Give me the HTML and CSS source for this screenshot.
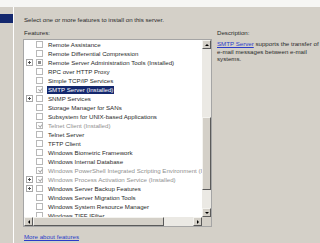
FILE: index.html
```html
<!DOCTYPE html>
<html>
<head>
    <title>Add Features Wizard</title>
    <link rel="stylesheet" href="styles.css">
</head>
<body>
    <div class="banner"></div>
    <div class="wizard">
        <div class="steps">
            <div class="step active"></div>
        </div>
        <div class="page">
            <p class="intro">Select one or more features to install on this server.</p>
            <div class="columns">
                <div class="features">
                    <div class="label">Features:</div>
                    <div class="listbox">
                        <div class="viewport">
                            <ul class="tree">
                                <li class="row"><span class="toggle"></span><span class="check"></span><span class="name">Remote Assistance</span></li>
                                <li class="row"><span class="toggle"></span><span class="check"></span><span class="name">Remote Differential Compression</span></li>
                                <li class="row"><span class="toggle plus"></span><span class="check partial"></span><span class="name">Remote Server Administration Tools  (Installed)</span></li>
                                <li class="row"><span class="toggle"></span><span class="check"></span><span class="name">RPC over HTTP Proxy</span></li>
                                <li class="row"><span class="toggle"></span><span class="check"></span><span class="name">Simple TCP/IP Services</span></li>
                                <li class="row selected"><span class="toggle"></span><span class="check on"></span><span class="name">SMTP Server  (Installed)</span></li>
                                <li class="row"><span class="toggle plus"></span><span class="check"></span><span class="name">SNMP Services</span></li>
                                <li class="row"><span class="toggle"></span><span class="check"></span><span class="name">Storage Manager for SANs</span></li>
                                <li class="row"><span class="toggle"></span><span class="check"></span><span class="name">Subsystem for UNIX-based Applications</span></li>
                                <li class="row installed"><span class="toggle"></span><span class="check on"></span><span class="name">Telnet Client  (Installed)</span></li>
                                <li class="row"><span class="toggle"></span><span class="check"></span><span class="name">Telnet Server</span></li>
                                <li class="row"><span class="toggle"></span><span class="check"></span><span class="name">TFTP Client</span></li>
                                <li class="row"><span class="toggle"></span><span class="check"></span><span class="name">Windows Biometric Framework</span></li>
                                <li class="row"><span class="toggle"></span><span class="check"></span><span class="name">Windows Internal Database</span></li>
                                <li class="row installed"><span class="toggle"></span><span class="check on"></span><span class="name">Windows PowerShell Integrated Scripting Environment (ISE)  (Installed)</span></li>
                                <li class="row installed"><span class="toggle plus"></span><span class="check on"></span><span class="name">Windows Process Activation Service  (Installed)</span></li>
                                <li class="row"><span class="toggle plus"></span><span class="check"></span><span class="name">Windows Server Backup Features</span></li>
                                <li class="row"><span class="toggle"></span><span class="check"></span><span class="name">Windows Server Migration Tools</span></li>
                                <li class="row"><span class="toggle"></span><span class="check"></span><span class="name">Windows System Resource Manager</span></li>
                                <li class="row"><span class="toggle"></span><span class="check"></span><span class="name">Windows TIFF IFilter</span></li>
                            </ul>
                        </div>
                        <div class="vscroll">
                            <span class="arrow up"></span>
                            <div class="track"><div class="thumb"></div></div>
                            <span class="arrow down"></span>
                        </div>
                        <div class="hscroll">
                            <span class="arrow left"></span>
                            <div class="track"><div class="thumb"></div></div>
                            <span class="arrow right"></span>
                        </div>
                        <div class="corner"></div>
                    </div>
                    <a class="more" href="#">More about features</a>
                </div>
                <div class="description">
                    <div class="label">Description:</div>
                    <p><a href="#">SMTP Server</a> supports the transfer of e-mail messages between e-mail systems.</p>
                </div>
            </div>
        </div>
    </div>
</body>
</html>
```

FILE: styles.css
```css
body {
    margin: 0;
    width: 320px;
    height: 243px;
    overflow: hidden;
    font-family: 'Liberation Sans', Arial, sans-serif;
    font-size: 6.15px;
    color: #2a2a2a;
    background: #d4d0c8;
}
a {
    color: #2a3cc8;
    text-decoration: underline;
}
.banner {
    height: 7px;
    background: #f6f6f4;
}
.wizard {
    display: flex;
    height: 236px;
}
.steps {
    width: 13px;
    border-right: 1px solid #fff;
    padding-top: 7px;
}
.step {
    height: 9px;
}
.step.active {
    background: #14286e;
}
.page {
    flex: 1;
    padding: 8px 0 0 9px;
    min-width: 0;
}
.intro {
    margin: 0 0 4px 1px;
    line-height: 9px;
    white-space: nowrap;
}
.columns {
    display: flex;
    gap: 5px;
}
.label {
    line-height: 9px;
    margin: 0 0 2px 1px;
}
.features {
    width: 189px;
    display: flex;
    flex-direction: column;
}
.description {
    flex: 1;
    min-width: 0;
}
.description .label {
    margin: 0 0 3px;
}
.description p {
    margin: 0;
    line-height: 7.5px;
}
/* List box with its two scroll bars */
.listbox {
    box-sizing: border-box;
    width: 189px;
    height: 188px;
    border: 1px solid #a5a5a5;
    background: #fff;
    display: grid;
    grid-template-columns: 1fr 9px;
    grid-template-rows: 1fr 9px;
}
.viewport {
    overflow: hidden;
    min-width: 0;
    min-height: 0;
}
.tree {
    list-style: none;
    margin: 0;
    padding: 0;
}
.row {
    display: flex;
    align-items: center;
    height: 9px;
    padding-left: 2px;
    white-space: nowrap;
}
.toggle {
    flex: none;
    width: 7px;
    height: 7px;
    margin-right: 3px;
    box-sizing: border-box;
    position: relative;
}
.toggle.plus {
    border: 1px solid #a8a8a8;
    background: #fff;
}
.toggle.plus::before,
.toggle.plus::after {
    content: '';
    position: absolute;
    background: #505050;
}
.toggle.plus::before {
    left: 1px;
    top: 2px;
    width: 3px;
    height: 1px;
}
.toggle.plus::after {
    left: 2px;
    top: 1px;
    width: 1px;
    height: 3px;
}
.check {
    flex: none;
    box-sizing: border-box;
    width: 7px;
    height: 7px;
    margin-right: 4px;
    border: 1px solid #b8b8b8;
    background: #fff;
    position: relative;
}
.check.partial {
    background: #8c8c8c;
    box-shadow: inset 0 0 0 1px #fff;
}
.check.on::after {
    content: '';
    position: absolute;
    left: 1.5px;
    top: 0;
    width: 1.5px;
    height: 3px;
    border: solid #a8a8a8;
    border-width: 0 1px 1px 0;
    transform: rotate(40deg);
}
.name {
    padding: 0 1px;
    line-height: 8px;
}
.row.installed .name {
    color: #909090;
}
.row.selected .name {
    background: #14286e;
    color: #fff;
}
.vscroll,
.hscroll {
    display: flex;
    background: #ebe9e4;
}
.vscroll {
    flex-direction: column;
}
.track {
    flex: 1;
}
.arrow,
.thumb,
.corner {
    background: #d4d0c8;
}
.arrow,
.thumb {
    box-sizing: border-box;
    border: 1px solid;
    border-color: #f4f3ef #5a5a5a #5a5a5a #f4f3ef;
}
.arrow {
    flex: none;
    width: 9px;
    height: 9px;
    position: relative;
}
.arrow::after {
    content: '';
    position: absolute;
    left: 2px;
    top: 2px;
    border: 2px solid transparent;
}
.arrow.up::after {
    top: 1px;
    border-bottom-color: #000;
}
.arrow.down::after {
    top: 3px;
    border-top-color: #000;
}
.arrow.left::after {
    left: 0.5px;
    border-right-color: #000;
}
.arrow.right::after {
    left: 3px;
    border-left-color: #000;
}
.vscroll .thumb {
    margin-top: 68px;
    height: 73px;
}
.hscroll .thumb {
    width: 131px;
    height: 9px;
}
.more {
    display: block;
    margin: 5px 0 0 1px;
    line-height: 9px;
}
```
